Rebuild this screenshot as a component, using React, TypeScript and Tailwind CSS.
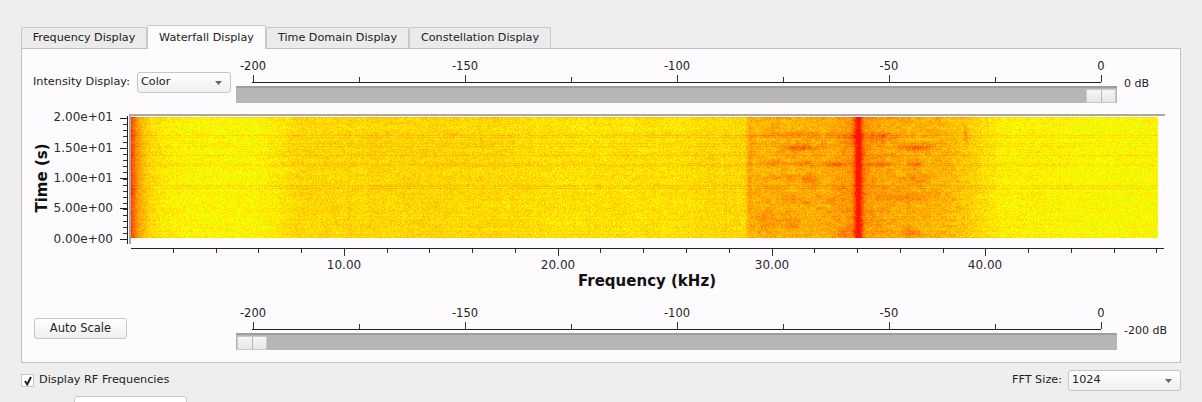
import { useEffect, useRef } from 'react';

const FONT = { fontFamily: '"DejaVu Sans", sans-serif' };

function rng(seed: number) {
  return () => {
    seed = (seed + 0x6d2b79f5) | 0;
    let t = Math.imul(seed ^ (seed >>> 15), 1 | seed);
    t = (t + Math.imul(t ^ (t >>> 7), 61 | t)) ^ t;
    return ((t ^ (t >>> 14)) >>> 0) / 4294967296;
  };
}

function ramp(x: number, a: number, b: number) {
  return Math.min(1, Math.max(0, (x - a) / (b - a)));
}

// darker patches either side of the carrier: x, y, half width, half height, strength
const BLOBS = [
  [798, 30, 14, 3, 0.3], [916, 30, 14, 3, 0.3], [790, 17, 30, 3, 0.12], [850, 19, 12, 4, 0.18], [880, 19, 14, 4, 0.2],
  [775, 45, 14, 2, 0.14], [803, 46, 10, 2, 0.2], [835, 47, 10, 2, 0.2], [880, 47, 12, 2, 0.2], [915, 47, 8, 3, 0.2],
  [780, 60, 18, 3, 0.13], [810, 62, 10, 5, 0.14], [915, 60, 10, 6, 0.14], [800, 82, 30, 6, 0.1], [905, 80, 28, 5, 0.12],
  [765, 102, 10, 10, 0.14], [790, 105, 12, 10, 0.12], [910, 115, 8, 4, 0.2], [845, 115, 8, 6, 0.12],
  [965, 16, 2, 10, 0.2], [749, 60, 2, 60, 0.1],
];

function profile(x: number) {
  let v = 0.03;
  v += 0.13 * ramp(x, 255, 300) - 0.04 * ramp(x, 480, 560);
  v += 0.03 * ramp(x, 680, 700);
  v += 0.15 * ramp(x, 744, 750) - 0.24 * ramp(x, 945, 1000);
  v -= 0.04 * ramp(x, 1040, 1090);
  v += 0.55 * Math.exp(-(x - 131) / 9) + 0.15 * Math.exp(-(x - 131) / 24);
  const d = Math.abs(x - 858);
  v += 0.55 * Math.exp(-((d / 4) ** 2)) + 0.18 * Math.exp(-d / 20);
  return v;
}

function Waterfall() {
  const ref = useRef<HTMLCanvasElement>(null);
  useEffect(() => {
    const ctx = ref.current!.getContext('2d')!;
    const W = 1027;
    const H = 121;
    const img = ctx.createImageData(W, H);
    const rand = rng(7);
    const rows = Array.from({ length: H }, () => (rand() - 0.5) * 0.05 + (rand() < 0.14 ? 0.09 : 0));
    const cols = Array.from({ length: W }, () => (rand() - 0.5) * 0.03);
    const patch = Array.from({ length: 50 * 50 }, () => rand() - 0.5);
    for (let y = 0; y < H; y++) {
      for (let i = 0; i < W; i++) {
        const x = i + 131;
        let v = profile(x) + rows[y] + cols[i] + (rand() - 0.5) * 0.22;
        // patchy texture, strongest in the band round the carrier
        const p = patch[Math.floor(y / 4) * 50 + Math.floor(i / 24)];
        const p2 = patch[(Math.floor(y / 3) * 37 + Math.floor(i / 5) * 11) % patch.length];
        v += p * 0.03 + p2 * (x > 748 && x < 965 ? 0.12 : 0.03);
        for (const [bx, by, bw, bh, s] of BLOBS) {
          const dx = (x - bx) / bw;
          const dy = (y - by) / bh;
          if (dx * dx + dy * dy < 4) v += s * Math.exp(-dx * dx - dy * dy) * (0.5 + rand());
        }
        const k = (y * W + i) * 4;
        if (v < 0) {
          img.data[k] = 255 + Math.max(v, -0.2) * 450;
          img.data[k + 1] = 255;
          img.data[k + 2] = 10;
        } else {
          img.data[k] = 255;
          img.data[k + 1] = 255 * (1 - Math.min(v, 0.92));
          img.data[k + 2] = 0;
        }
        img.data[k + 3] = 255;
      }
    }
    ctx.putImageData(img, 0, 0);
  }, []);
  return <canvas ref={ref} width={1027} height={121} className="absolute left-[109px] top-[10px] blur-[0.4px]" />;
}

function PlotAxes() {
  const yMajor = [
    [11, 10, '2.00e+01'],
    [41, 41, '1.50e+01'],
    [71, 71, '1.00e+01'],
    [101, 101, '5.00e+00'],
    [132, 132, '0.00e+00'],
  ] as const;
  const xLabels = ['10.00', '20.00', '30.00', '40.00'];
  const minorY: number[] = [];
  for (let i = 0; i < 21; i++) minorY.push(11 + i * 6.05);
  const xTicks: number[] = [];
  for (let i = 1; i <= 24; i++) xTicks.push(i);
  return (
    <svg width={1158} height={190} className="block" fill="#2a2a2a" fontSize={12} style={FONT}>
      <path d="M108 8H1143" stroke="#a9a8a9" strokeWidth={2} />
      <path d="M108 7v130" stroke="#a9a8a9" strokeWidth={2} />
      <path d="M105.5 9v128" stroke="#222" />
      <path d="M109 141.5H1142" stroke="#222" />
      {minorY.map((y) => (
        <path key={y} d={`M101 ${Math.round(y) + 0.5}h4`} stroke="#333" />
      ))}
      {yMajor.map(([y, textY, label]) => (
        <g key={label}>
          <path d={`M98 ${y + 0.5}h7`} stroke="#222" />
          <text x={91} y={textY + 4} textAnchor="end">{label}</text>
        </g>
      ))}
      {xTicks.map((i) => {
        const x = Math.round(108 + i * 42.77);
        const major = i % 5 === 0;
        return (
          <g key={i}>
            <path d={`M${x + 0.5} 142v${major ? 7 : 4}`} stroke="#333" />
            {major && <text x={x} y={162} textAnchor="middle">{xLabels[i / 5 - 1]}</text>}
          </g>
        );
      })}
      <text x={625} y={179} textAnchor="middle" fontSize={15} fontWeight={700} fill="#111">Frequency (kHz)</text>
      <text transform="translate(25 71) rotate(-90)" textAnchor="middle" fontSize={15} fontWeight={700} fill="#111">Time (s)</text>
    </svg>
  );
}

function Ruler() {
  const ticks = [0, 1, 2, 3, 4, 5, 6, 7, 8];
  return (
    <svg width={881} height={28} className="block" fill="#222" fontSize={11.5} style={FONT}>
      <path d="M16 24.5H865" stroke="#222" />
      {ticks.map((i) => {
        const x = Math.round(16.5 + i * 106);
        const major = i % 2 === 0;
        return (
          <g key={i}>
            <path d={`M${x + 0.5} ${major ? 17 : 19}V24`} stroke="#333" />
            {major && <text x={x} y={12} textAnchor="middle">{-200 + i * 25}</text>}
          </g>
        );
      })}
    </svg>
  );
}

function Slider({ value, handleAt }: { value: string; handleAt: 'start' | 'end' }) {
  return (
    <div className="flex items-start">
      <div className="w-[881px]">
        <Ruler />
        <div
          className={`flex h-[17px] items-center border-t-2 border-[#9f9e9f] bg-[#b7b6b7] px-px ${
            handleAt === 'end' ? 'justify-end' : 'justify-start'
          }`}
        >
          <div className="flex h-[14px] w-[30px] justify-center border border-[#c8c8c8] bg-gradient-to-b from-[#f6f6f6] to-[#e6e6e6]">
            <div className="w-px bg-[#b5b5b5]" />
          </div>
        </div>
      </div>
      <span className="ml-[7px] mt-[18px] text-[11px] leading-4 text-[#222]">{value}</span>
    </div>
  );
}

function Combo({ label, className }: { label: string; className: string }) {
  return (
    <div
      className={`flex items-center justify-between rounded-[3px] border border-[#c6c6c6] bg-gradient-to-b from-white to-[#efefef] pl-[3px] pr-2 text-[11.25px] text-[#222] ${className}`}
    >
      <span>{label}</span>
      <svg width={7} height={4} viewBox="0 0 7 4">
        <path d="M0 0h7L3.5 4z" fill="#666" />
      </svg>
    </div>
  );
}

function Tab({ label, active, className }: { label: string; active?: boolean; className: string }) {
  return active ? (
    <div className={`relative -mb-px flex h-[24px] items-start justify-center rounded-t-[2px] border border-b-0 border-[#c9c9c9] bg-[#fefbfe] pt-[4px] ${className}`}>
      {label}
    </div>
  ) : (
    <div className={`flex h-[21px] items-center justify-center rounded-t-[2px] border border-b-0 border-[#c9c9c9] bg-[#ebebeb] ${className}`}>
      {label}
    </div>
  );
}

export default function App() {
  return (
    <div className="h-[402px] w-[1202px] overflow-hidden bg-[#eeeeee] pl-[21px] pt-[25px] text-[#222]" style={FONT}>
      <div className="flex items-end text-[11.2px] leading-4">
        <Tab label="Frequency Display" className="w-[126px]" />
        <Tab label="Waterfall Display" active className="w-[119px]" />
        <Tab label="Time Domain Display" className="w-[143px]" />
        <Tab label="Constellation Display" className="w-[142px]" />
      </div>
      <div className="h-[315px] w-[1160px] border border-[#c2c2c2] bg-[#fefbfe]">
        <div className="flex h-[58px] items-start pt-[9px]">
          <div className="flex w-[214px] items-center pl-[11px] pt-[14px] text-[11.25px]">
            <span className="w-[104px]">Intensity Display:</span>
            <Combo label="Color" className="h-[21px] w-[94px]" />
          </div>
          <Slider value="0 dB" handleAt="end" />
        </div>
        <div className="relative h-[190px]">
          <PlotAxes />
          <Waterfall />
        </div>
        <div className="flex items-start">
          <div className="w-[214px] pl-[12px] pt-[18px]">
            <button className="h-[21px] w-[93px] rounded-[3px] border border-[#c6c6c6] bg-gradient-to-b from-white to-[#efefef] text-[11.5px] text-[#222]">
              Auto Scale
            </button>
          </div>
          <div className="pt-[8px]">
            <Slider value="-200 dB" handleAt="start" />
          </div>
        </div>
      </div>
      <div className="mt-[7px] flex w-[1160px] items-center justify-between">
        <label className="flex items-center text-[11.25px]">
          <span className="mr-[5px] flex h-[13px] w-[13px] items-center justify-center border border-[#c6c6c6] bg-white">
            <svg width={10} height={10} viewBox="0 0 10 10">
              <path d="M2 5l2.2 3.4L8 1" fill="none" stroke="#222" strokeWidth={2} />
            </svg>
          </span>
          Display RF Frequencies
        </label>
        <div className="flex items-center text-[11.25px]">
          <span className="mr-[6px]">FFT Size:</span>
          <Combo label="1024" className="h-[21px] w-[113px]" />
        </div>
      </div>
      <div className="ml-[53px] mt-[5px] h-5 w-[113px] rounded-[3px] border border-[#c6c6c6] bg-white" />
    </div>
  );
}
